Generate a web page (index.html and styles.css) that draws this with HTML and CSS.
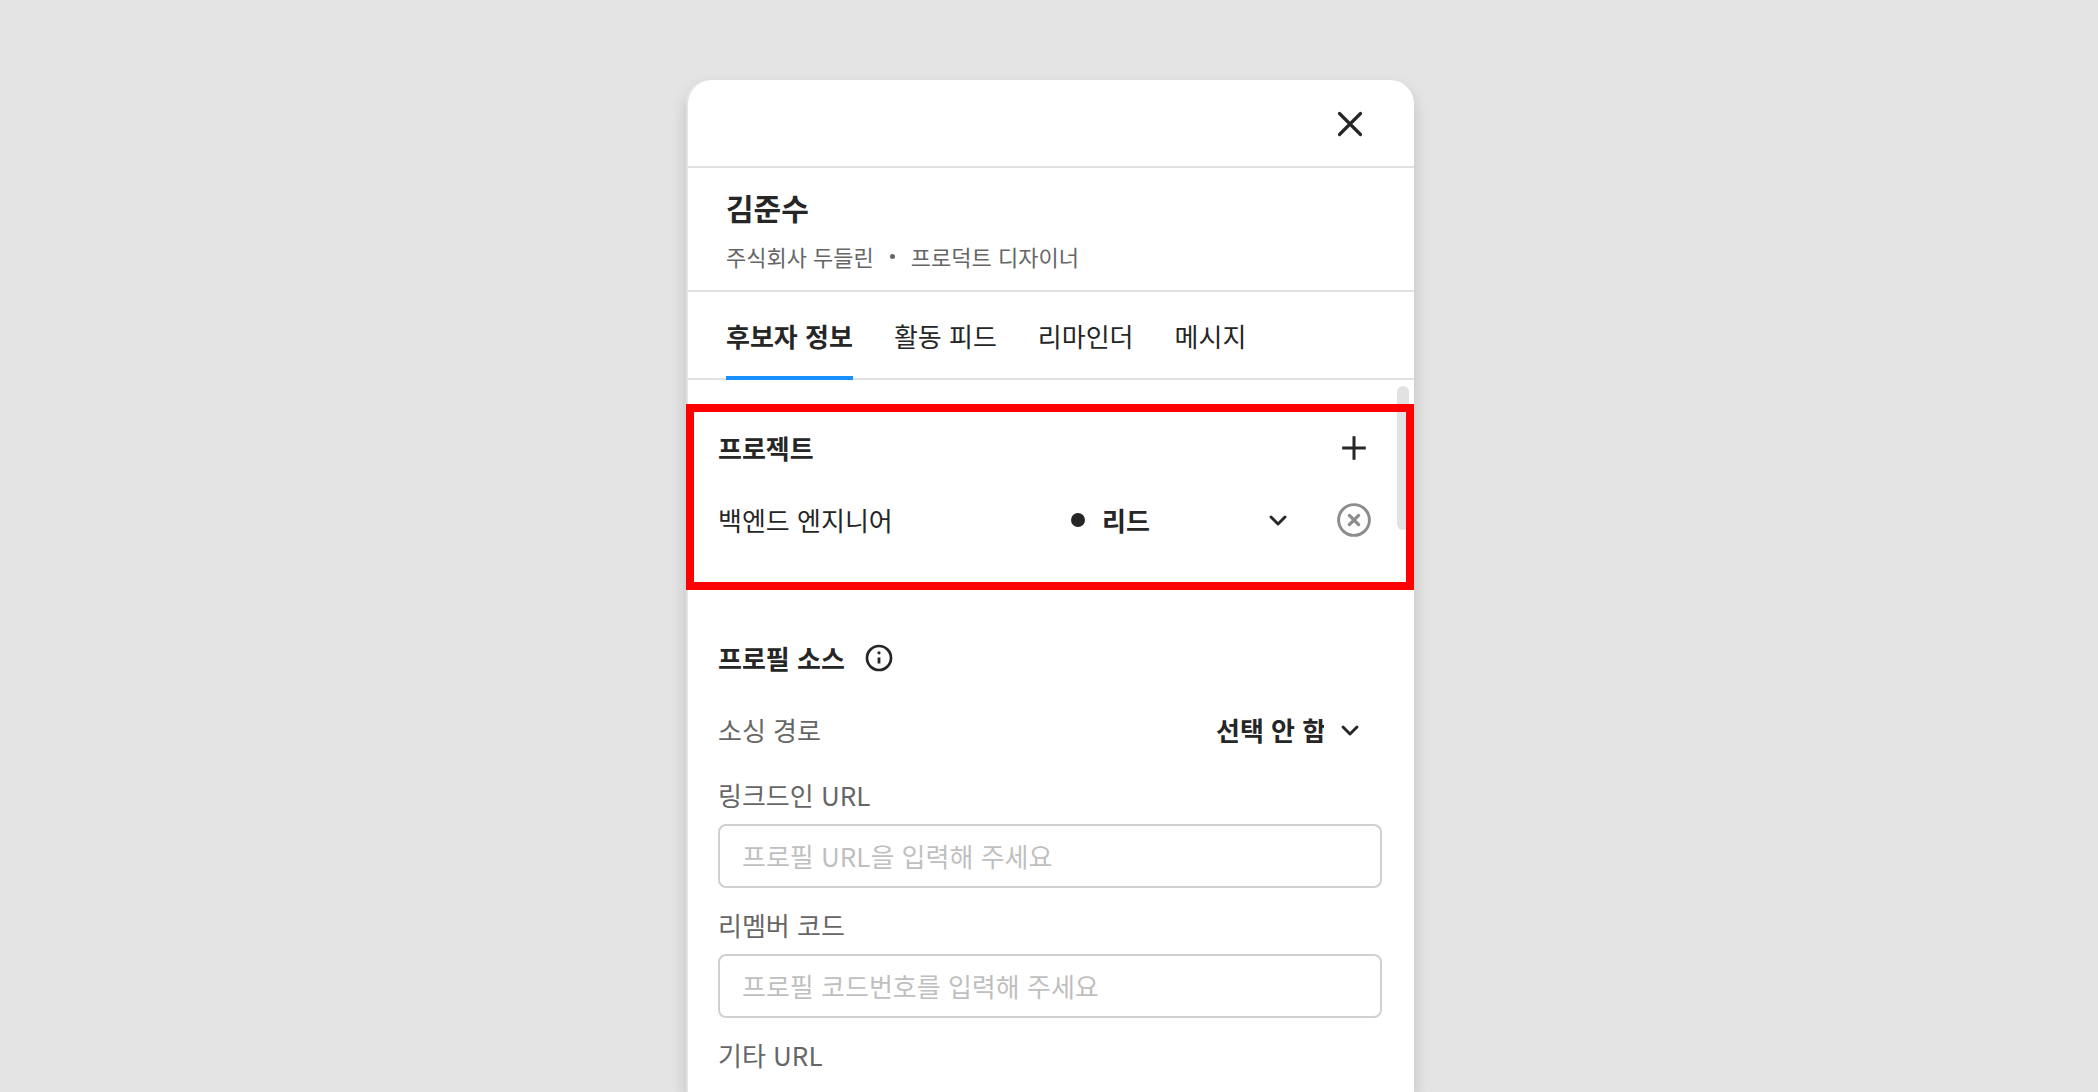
FILE: index.html
```html
<!DOCTYPE html>
<html lang="ko">
<head>
<meta charset="utf-8">
<meta name="viewport" content="width=device-width, initial-scale=1">
<title>김준수</title>
<link rel="stylesheet" href="styles.css">
</head>
<body>
<main class="panel">
  <header class="panel-bar">
    <button class="icon-button" type="button" aria-label="닫기">
      <svg width="28" height="28" viewBox="0 0 28 28"><path d="M3.5 3.5l21 21M24.500 3.500l-21 21" stroke-width="3.2"/></svg>
    </button>
  </header>

  <div class="person">
    <h1 class="person-name">김준수</h1>
    <p class="person-meta"><span>주식회사 두들린</span><i class="meta-dot"></i><span>프로덕트 디자이너</span></p>
  </div>

  <nav class="tabs">
    <button class="tab tab-active" type="button">후보자 정보</button>
    <button class="tab" type="button">활동 피드</button>
    <button class="tab" type="button">리마인더</button>
    <button class="tab" type="button">메시지</button>
  </nav>

  <div class="content">
    <div class="scroll-thumb"></div>

    <section class="projects">
      <div class="row">
        <h2 class="section-title">프로젝트</h2>
        <button class="icon-button push" type="button" aria-label="프로젝트 추가">
          <svg width="28" height="28" viewBox="0 0 28 28"><path d="M14 2.200v23.600M2.200 14h23.600" stroke-width="3" stroke-linecap="butt"/></svg>
        </button>
      </div>
      <div class="row">
        <label class="project-name" for="stage">백엔드 엔지니어</label>
        <div class="picker stage push">
          <i class="stage-dot"></i>
          <select id="stage"><option>리드</option></select>
          <svg class="chevron" width="24" height="24" viewBox="0 0 24 24"><path d="M5 9l7 7 7-7" stroke-width="2.900"/></svg>
        </div>
        <button class="icon-button remove" type="button" aria-label="프로젝트 삭제">
          <svg width="36" height="36" viewBox="0 0 36 36"><circle cx="18" cy="18" r="15.400" stroke-width="2.900"/><path d="M13.400 13.400l9.200 9.200M22.600 13.400l-9.200 9.200" stroke-width="3.300"/></svg>
        </button>
      </div>
    </section>

    <section class="source">
      <div class="row title-row">
        <h2 class="section-title">프로필 소스</h2>
        <svg width="28" height="28" viewBox="0 0 28 28"><circle cx="14" cy="14" r="12" stroke-width="2.700"/><path d="M14 13.500v6" stroke-width="2.800" stroke-linecap="butt"/><circle class="fill" cx="14" cy="8.800" r="1.600"/></svg>
      </div>
      <div class="row">
        <label class="label" for="channel">소싱 경로</label>
        <div class="picker channel push">
          <select id="channel"><option>선택 안 함</option></select>
          <svg class="chevron" width="24" height="24" viewBox="0 0 24 24"><path d="M5 9l7 7 7-7" stroke-width="2.900"/></svg>
        </div>
      </div>
      <div class="fields">
        <div class="field">
          <label class="label" for="linkedin">링크드인 URL</label>
          <input id="linkedin" type="text" placeholder="프로필 URL을 입력해 주세요">
        </div>
        <div class="field">
          <label class="label" for="remember">리멤버 코드</label>
          <input id="remember" type="text" placeholder="프로필 코드번호를 입력해 주세요">
        </div>
        <div class="field">
          <span class="label">기타 URL</span>
        </div>
      </div>
    </section>
  </div>
</main>
</body>
</html>
```
FILE: styles.css
```css
* {
  box-sizing: border-box;
}

body {
  margin: 0;
  padding-left: 2px;
  background: #e4e4e4;
  color: #262626;
  font-family: "Noto Sans CJK KR", sans-serif;
  font-size: 26px;
  line-height: 40px;
}

h1, h2, p {
  margin: 0;
}

button, input, select {
  font: inherit;
  color: inherit;
}

svg {
  flex: none;
  fill: none;
  stroke: currentColor;
  stroke-linecap: round;
  stroke-linejoin: round;
}

.fill {
  fill: currentColor;
  stroke: none;
}

.panel {
  width: 100%;
  max-width: 728px;
  min-height: calc(100vh - 80px);
  margin: 80px auto 0;
  background: #fff;
  border-radius: 24px 24px 0 0;
  box-shadow: inset 2px 0 0 #e2e2e2, 0 8px 16px rgba(0, 0, 0, 0.16);
}

.panel-bar {
  display: flex;
  align-items: center;
  justify-content: flex-end;
  height: 88px;
  padding: 2px 44px 0;
  border-bottom: 2px solid #e2e2e2;
}

.icon-button {
  display: flex;
  align-items: center;
  justify-content: center;
  width: 40px;
  height: 40px;
  padding: 0;
  border: 0;
  background: none;
}

.person {
  display: grid;
  gap: 14px;
  padding: 20px 40px 18px;
  border-bottom: 2px solid #e2e2e2;
}

.person-name {
  font-size: 30px;
  line-height: 38px;
  font-weight: 700;
}

.person-meta {
  display: flex;
  align-items: center;
  gap: 16px;
  color: #666;
  font-size: 22px;
  line-height: 32px;
}

.meta-dot {
  width: 5px;
  height: 5px;
  border-radius: 50%;
  background: #666;
}

.tabs {
  display: flex;
  gap: 41px;
  height: 88px;
  padding: 0 40px;
  box-shadow: inset 0 -2px 0 #e2e2e2;
}

.tab {
  padding: 4px 0 0;
  border: 0;
  border-bottom: 4px solid transparent;
  background: none;
}

.tab-active {
  border-color: #1890ff;
  font-weight: 700;
}

.content {
  position: relative;
  padding-top: 24px;
}

.scroll-thumb {
  position: absolute;
  top: 6px;
  right: 5px;
  width: 12px;
  height: 144px;
  border-radius: 6px;
  background: #e2e2e2;
}

.projects {
  position: relative;
  display: grid;
  gap: 32px;
  padding: 16px 32px 42px 24px;
  border: 8px solid #f00;
}

.row {
  display: flex;
  align-items: center;
  height: 40px;
}

.push {
  margin-left: auto;
}

.section-title {
  font-size: 26px;
  font-weight: 700;
}

.title-row {
  gap: 20px;
}

.picker {
  position: relative;
  display: flex;
  align-items: center;
}

.picker select {
  width: 100%;
  height: 40px;
  padding: 0;
  border: 0;
  appearance: none;
  background: none;
  font-weight: 700;
}

.stage {
  width: 232px;
}

.picker.stage select {
  padding-left: 32px;
}

.stage-dot {
  position: absolute;
  left: 1px;
  width: 14px;
  height: 14px;
  border-radius: 50%;
  background: #262626;
}

.chevron {
  position: absolute;
  right: 12px;
  pointer-events: none;
}

.picker.channel select {
  padding-right: 58px;
}

.channel .chevron {
  right: 20px;
}

.remove {
  margin-left: 32px;
  color: #8c8c8c;
}

.source {
  display: grid;
  gap: 32px;
  padding: 48px 32px 0;
}

.label {
  color: #666;
}

.fields {
  display: grid;
  gap: 18px;
  margin-top: -6px;
}

.field {
  display: grid;
  gap: 10px;
  line-height: 38px;
}

.field input {
  width: 100%;
  height: 64px;
  padding: 0 22px 2px;
  border: 2px solid #d0d0d0;
  border-radius: 8px;
  outline: 0;
  background: #fff;
}

.field input::placeholder {
  color: #bfbfbf;
  opacity: 1;
}
```
